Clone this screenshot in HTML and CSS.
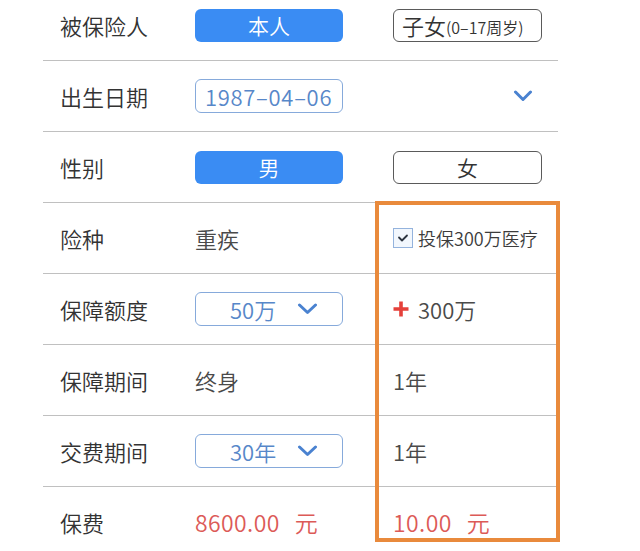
FILE: index.html
```html
<!DOCTYPE html>
<html lang="zh-CN">
<head>
<meta charset="utf-8">
<title>保险计算</title>
<link rel="stylesheet" href="styles.css">
</head>
<body>
<div class="form">
  <div class="row">
    <div class="label">被保险人</div>
    <div class="cell"><span class="btn btn-primary">本人</span></div>
    <div class="cell"><span class="btn btn-outline btn-left">子女<small>(0–17周岁)</small></span></div>
  </div>
  <div class="row">
    <div class="label">出生日期</div>
    <div class="cell"><span class="box date">1987–04–06</span></div>
    <div class="cell cell-end">
      <svg class="chev" width="20" height="12" viewBox="0 0 20 12"><polyline points="2.5,2 10,9.5 17.5,2" fill="none" stroke="#4a82d0" stroke-width="3" stroke-linecap="round" stroke-linejoin="round"/></svg>
    </div>
  </div>
  <div class="row">
    <div class="label">性别</div>
    <div class="cell"><span class="btn btn-primary">男</span></div>
    <div class="cell"><span class="btn btn-outline">女</span></div>
  </div>
  <div class="row">
    <div class="label">险种</div>
    <div class="cell value">重疾</div>
    <div class="cell">
      <span class="check"><svg width="12" height="10" viewBox="0 0 12 10"><polyline points="2,4.5 5,7.5 10,2.5" fill="none" stroke="#2c3440" stroke-width="1.8" stroke-linecap="round" stroke-linejoin="round"/></svg></span>
      <span class="check-text">投保300万医疗</span>
    </div>
  </div>
  <div class="row">
    <div class="label">保障额度</div>
    <div class="cell"><span class="box select"><span>50万</span><svg width="21" height="12" viewBox="0 0 21 12"><polyline points="2.5,2 10.5,9.5 18.5,2" fill="none" stroke="#4a82d0" stroke-width="3" stroke-linecap="round" stroke-linejoin="round"/></svg></span></div>
    <div class="cell value"><svg class="plus" width="16" height="16" viewBox="0 0 16 16"><path d="M8 0.5v15M0.5 8h15" stroke="#e5403a" stroke-width="3.6"/></svg>300万</div>
  </div>
  <div class="row">
    <div class="label">保障期间</div>
    <div class="cell value">终身</div>
    <div class="cell value">1年</div>
  </div>
  <div class="row">
    <div class="label">交费期间</div>
    <div class="cell"><span class="box select"><span>30年</span><svg width="21" height="12" viewBox="0 0 21 12"><polyline points="2.5,2 10.5,9.5 18.5,2" fill="none" stroke="#4a82d0" stroke-width="3" stroke-linecap="round" stroke-linejoin="round"/></svg></span></div>
    <div class="cell value">1年</div>
  </div>
  <div class="row row-last">
    <div class="label">保费</div>
    <div class="cell price">8600.00<span class="unit">元</span></div>
    <div class="cell price">10.00<span class="unit">元</span></div>
  </div>
  <div class="highlight"></div>
</div>
</body>
</html>
```

FILE: styles.css
```css
html, body {
  margin: 0;
  padding: 0;
  background: #ffffff;
  overflow: hidden;
}

body {
  font-family: "Noto Sans CJK SC", "Noto Sans", sans-serif;
  font-weight: 350;
  color: #333333;
  width: 640px;
  height: 551px;
}

.form {
  position: relative;
  margin-top: -10px;
  margin-left: 43px;
  width: 515px;
}

.row {
  display: grid;
  grid-template-columns: 135px 198px 1fr;
  align-items: center;
  height: 70px;
  padding-left: 17px;
  border-bottom: 1px solid #c0c0c0;
}

.row-last {
  border-bottom: none;
}

.label {
  font-size: 22px;
  color: #333333;
  line-height: 1;
}

.cell {
  display: flex;
  align-items: center;
  font-size: 22px;
  line-height: 1;
}

.cell-end {
  justify-content: flex-end;
  padding-right: 25px;
}

.value {
  color: #4a4a4a;
}

.btn {
  display: flex;
  align-items: center;
  justify-content: center;
  box-sizing: border-box;
  height: 33px;
  border-radius: 6px;
  font-size: 21px;
  line-height: 1;
}

.btn-primary {
  width: 148px;
  background: #3a8cf3;
  color: #ffffff;
}

.btn-outline {
  width: 149px;
  border: 1px solid #5a5a5a;
  color: #333333;
}

.btn-left {
  justify-content: flex-start;
  padding-left: 8px;
  font-size: 22px;
}

.btn-outline small {
  font-size: 16px;
  margin-top: 3px;
}

.box {
  box-sizing: border-box;
  width: 148px;
  height: 34px;
  border: 1px solid #86aadb;
  border-radius: 6px;
  color: #5787c9;
  display: flex;
  align-items: center;
  font-size: 22px;
}

.date {
  padding-left: 9px;
  font-size: 22px;
  letter-spacing: 0.7px;
}

.select {
  padding-left: 34px;
  gap: 21px;
}

.check {
  box-sizing: border-box;
  width: 20px;
  height: 20px;
  border: 1px solid #94b3dd;
  background: #f2f7fd;
  display: flex;
  align-items: center;
  justify-content: center;
  margin-right: 5px;
}

.check-text {
  font-size: 18px;
  color: #3c3c3c;
}

.plus {
  margin-right: 9px;
}

.price {
  color: #dc5a57;
  font-size: 23px;
  letter-spacing: 0.4px;
}

.unit {
  margin-left: 15px;
}

.highlight {
  position: absolute;
  left: 332px;
  top: 211px;
  width: 185px;
  height: 341px;
  box-sizing: border-box;
  border: 4px solid #e98a3c;
  pointer-events: none;
}
```
